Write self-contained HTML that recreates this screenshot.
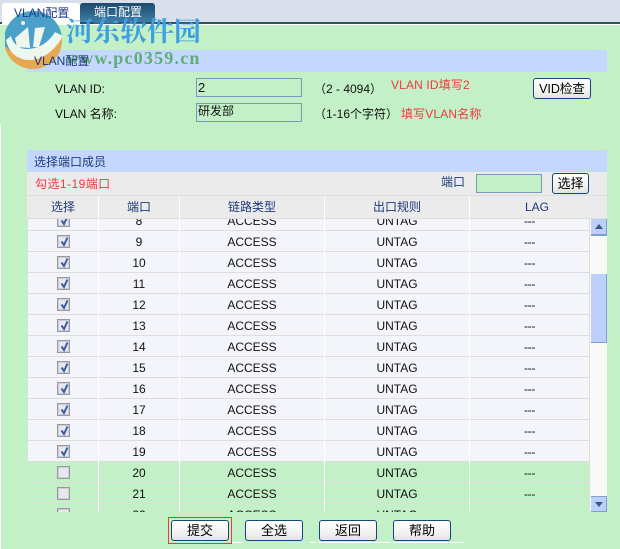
<!DOCTYPE html>
<html lang="zh">
<head>
<meta charset="utf-8">
<style>
html,body{margin:0;padding:0}
body{width:620px;height:549px;overflow:hidden;position:relative;background:#c3f0c6;font:12px "Liberation Sans","WenQuanYi Zen Hei","Noto Sans CJK SC",sans-serif;color:#111}
div,span{position:absolute;white-space:nowrap}
.blue{color:#1d3a7a}
.red{color:#f0383c}
.panel{left:27px;width:580px;height:22px;background:#c4d8fe}
.inp{border:1px solid #7799bb;box-sizing:border-box}
.btn{box-sizing:border-box;border:1px solid #12477f;border-radius:3px;background:linear-gradient(#fff,#f2f2f2 60%,#e4e4dc);text-align:center;color:#000;font-size:13px}
.row{left:28px;width:561px;height:20px;border-bottom:1px solid #ddd;background:#f3f5fb}
.off{background:#c3f0c6}
.row span{top:3px;line-height:16px;text-align:center}
.c1{left:0;width:70px}.c2{left:71px;width:80px}.c3{left:152px;width:144px}.c4{left:297px;width:144px}.c5{left:442px;width:119px;letter-spacing:-.3px}
.cb{left:29px;top:4px;width:13px;height:13px;box-sizing:border-box;border:1px solid #999;background:#e6e8ee;box-shadow:inset 0 0 0 1px #ccd}
.cb svg{position:absolute;left:1px;top:0}
.sep{width:1px;background:#fff}
.hd{top:196px;height:22px;line-height:22px;text-align:center;color:#1d3a7a}
.wl{top:542px;height:1px;background:#fff}
</style>
</head>
<body>
<div style="left:0;top:0;width:620px;height:22px;background:#d9dfeb"></div>
<div style="left:0;top:22px;width:620px;height:2px;background:#33505f"></div>
<div style="left:0;top:24px;width:620px;height:1px;background:#fff"></div>
<div style="left:0;top:124px;width:1px;height:425px;background:#fff"></div>
<div style="left:2px;top:3px;width:78px;height:22px;background:#fff;border-radius:3px 3px 0 0"></div>
<div style="left:80px;top:3px;width:75px;height:19px;background:linear-gradient(#1d4a6c,#3f7ea8);border-radius:3px 3px 0 0"></div>
<div style="left:94px;top:4px;line-height:16px;color:#fff">端口配置</div>

<div class="panel" style="top:50px"></div>

<svg style="position:absolute;left:5px;top:10px" width="58" height="60" viewBox="0 0 58 60">
<defs><clipPath id="lc"><circle cx="28" cy="30" r="29"/></clipPath></defs>
<g clip-path="url(#lc)">
<rect width="58" height="60" fill="#4aa0c8"/>
<path d="M0 36L15 49L35 46L58 27V60H0Z" fill="#e8a850"/>
<path d="M1 30C4 44 14 50 24 50C38 50 50 40 58 26L50 22C44 32 34 39 22 39C14 39 8 34 6 26Z" fill="#eef7ee"/>
<path d="M10 28L23 17L25 38L12 37Z" fill="#eef7ee"/>
<path d="M30 18L40 17L34 37L28 37Z" fill="#eef7ee"/>
<circle cx="18" cy="13" r="2" fill="#eef7ee"/>
</g>
</svg>

<div style="left:66px;top:13px;font:bold 27px/34px 'Noto Serif CJK SC','Liberation Serif',serif;color:#3d9fe0">河东软件园</div>
<div style="left:66px;top:47px;font:bold 18px/22px 'Liberation Serif',serif;color:#62ad76;letter-spacing:1.2px">www.pc0359.cn</div>
<div style="left:14px;top:5px;line-height:16px;color:#1d3a8a">VLAN配置</div>
<div class="blue" style="left:34px;top:54px;line-height:14px">VLAN配置</div>

<div style="left:55px;top:81px;line-height:16px">VLAN ID:</div>
<div style="left:55px;top:106px;line-height:16px">VLAN 名称:</div>
<div class="inp" style="left:196px;top:78px;width:106px;height:19px;padding-left:1px;line-height:17px;font-size:13px">2</div>
<div class="inp" style="left:196px;top:103px;width:106px;height:19px;padding-left:1px;line-height:15px">研发部</div>
<div style="left:314px;top:81px;line-height:16px">（2 - 4094）</div>
<div style="left:314px;top:106px;line-height:16px">（1-16个字符）</div>
<div class="red" style="left:391px;top:77px;line-height:16px;letter-spacing:.15px">VLAN ID填写2</div>
<div class="red" style="left:401px;top:106px;line-height:16px;letter-spacing:.15px">填写VLAN名称</div>
<div class="btn" style="left:533px;top:78px;width:58px;height:21px;line-height:20px;font-size:12.5px">VID检查</div>

<div class="panel" style="top:150px"></div>
<div class="blue" style="left:34px;top:154px;line-height:16px">选择端口成员</div>
<div style="left:27px;top:172px;width:580px;height:23px;background:#ebebeb"></div>
<div class="red" style="left:35px;top:176px;line-height:16px;letter-spacing:.45px">勾选1-19端口</div>
<div class="blue" style="left:441px;top:174px;line-height:16px">端口</div>
<div class="inp" style="left:476px;top:174px;width:66px;height:19px;background:#c3f0c6"></div>
<div class="btn" style="left:552px;top:173px;width:37px;height:21px;line-height:20px">选择</div>
<div style="left:27px;top:195px;width:580px;height:1px;background:#ddd"></div>
<div style="left:27px;top:196px;width:580px;height:22px;background:#ebebeb"></div>
<div class="hd" style="left:28px;width:70px">选择</div>
<div class="hd" style="left:99px;width:80px">端口</div>
<div class="hd" style="left:180px;width:144px">链路类型</div>
<div class="hd" style="left:325px;width:144px">出口规则</div>
<div class="hd" style="left:470px;width:134px">LAG</div>
<div style="left:27px;top:218px;width:580px;height:1px;background:#ddd"></div>

<div style="left:0;top:219px;width:620px;height:293px;overflow:hidden">
<div class="row" style="top:-9px"><div class="cb"><svg width="11" height="11" viewBox="0 0 11 11"><path d="M2.5 5.5L5 9L8.5 1.5" fill="none" stroke="#3d5ca8" stroke-width="2"/></svg></div><span class="c2">8</span><span class="c3">ACCESS</span><span class="c4">UNTAG</span><span class="c5">---</span></div>
<div class="row" style="top:12px"><div class="cb"><svg width="11" height="11" viewBox="0 0 11 11"><path d="M2.5 5.5L5 9L8.5 1.5" fill="none" stroke="#3d5ca8" stroke-width="2"/></svg></div><span class="c2">9</span><span class="c3">ACCESS</span><span class="c4">UNTAG</span><span class="c5">---</span></div>
<div class="row" style="top:33px"><div class="cb"><svg width="11" height="11" viewBox="0 0 11 11"><path d="M2.5 5.5L5 9L8.5 1.5" fill="none" stroke="#3d5ca8" stroke-width="2"/></svg></div><span class="c2">10</span><span class="c3">ACCESS</span><span class="c4">UNTAG</span><span class="c5">---</span></div>
<div class="row" style="top:54px"><div class="cb"><svg width="11" height="11" viewBox="0 0 11 11"><path d="M2.5 5.5L5 9L8.5 1.5" fill="none" stroke="#3d5ca8" stroke-width="2"/></svg></div><span class="c2">11</span><span class="c3">ACCESS</span><span class="c4">UNTAG</span><span class="c5">---</span></div>
<div class="row" style="top:75px"><div class="cb"><svg width="11" height="11" viewBox="0 0 11 11"><path d="M2.5 5.5L5 9L8.5 1.5" fill="none" stroke="#3d5ca8" stroke-width="2"/></svg></div><span class="c2">12</span><span class="c3">ACCESS</span><span class="c4">UNTAG</span><span class="c5">---</span></div>
<div class="row" style="top:96px"><div class="cb"><svg width="11" height="11" viewBox="0 0 11 11"><path d="M2.5 5.5L5 9L8.5 1.5" fill="none" stroke="#3d5ca8" stroke-width="2"/></svg></div><span class="c2">13</span><span class="c3">ACCESS</span><span class="c4">UNTAG</span><span class="c5">---</span></div>
<div class="row" style="top:117px"><div class="cb"><svg width="11" height="11" viewBox="0 0 11 11"><path d="M2.5 5.5L5 9L8.5 1.5" fill="none" stroke="#3d5ca8" stroke-width="2"/></svg></div><span class="c2">14</span><span class="c3">ACCESS</span><span class="c4">UNTAG</span><span class="c5">---</span></div>
<div class="row" style="top:138px"><div class="cb"><svg width="11" height="11" viewBox="0 0 11 11"><path d="M2.5 5.5L5 9L8.5 1.5" fill="none" stroke="#3d5ca8" stroke-width="2"/></svg></div><span class="c2">15</span><span class="c3">ACCESS</span><span class="c4">UNTAG</span><span class="c5">---</span></div>
<div class="row" style="top:159px"><div class="cb"><svg width="11" height="11" viewBox="0 0 11 11"><path d="M2.5 5.5L5 9L8.5 1.5" fill="none" stroke="#3d5ca8" stroke-width="2"/></svg></div><span class="c2">16</span><span class="c3">ACCESS</span><span class="c4">UNTAG</span><span class="c5">---</span></div>
<div class="row" style="top:180px"><div class="cb"><svg width="11" height="11" viewBox="0 0 11 11"><path d="M2.5 5.5L5 9L8.5 1.5" fill="none" stroke="#3d5ca8" stroke-width="2"/></svg></div><span class="c2">17</span><span class="c3">ACCESS</span><span class="c4">UNTAG</span><span class="c5">---</span></div>
<div class="row" style="top:201px"><div class="cb"><svg width="11" height="11" viewBox="0 0 11 11"><path d="M2.5 5.5L5 9L8.5 1.5" fill="none" stroke="#3d5ca8" stroke-width="2"/></svg></div><span class="c2">18</span><span class="c3">ACCESS</span><span class="c4">UNTAG</span><span class="c5">---</span></div>
<div class="row" style="top:222px"><div class="cb"><svg width="11" height="11" viewBox="0 0 11 11"><path d="M2.5 5.5L5 9L8.5 1.5" fill="none" stroke="#3d5ca8" stroke-width="2"/></svg></div><span class="c2">19</span><span class="c3">ACCESS</span><span class="c4">UNTAG</span><span class="c5">---</span></div>
<div class="row off" style="top:243px"><div class="cb"></div><span class="c2">20</span><span class="c3">ACCESS</span><span class="c4">UNTAG</span><span class="c5">---</span></div>
<div class="row off" style="top:264px"><div class="cb"></div><span class="c2">21</span><span class="c3">ACCESS</span><span class="c4">UNTAG</span><span class="c5">---</span></div>
<div class="row off" style="top:285px"><div class="cb"></div><span class="c2">22</span><span class="c3">ACCESS</span><span class="c4">UNTAG</span><span class="c5">---</span></div>
</div>

<div class="sep" style="left:98px;top:196px;height:316px"></div>
<div class="sep" style="left:179px;top:196px;height:316px"></div>
<div class="sep" style="left:324px;top:196px;height:316px"></div>
<div class="sep" style="left:469px;top:196px;height:316px"></div>

<div style="left:589px;top:219px;width:1px;height:293px;background:#ddd"></div>
<div style="left:590px;top:219px;width:17px;height:293px;background:#f8f8f6"></div>
<div style="left:591px;top:219px;width:16px;height:17px;box-sizing:border-box;background:#bdd0fa;border-right:1px solid #7f9fd0;border-bottom:2px solid #7f9fd0"></div>
<svg style="position:absolute;left:595px;top:224px" width="8" height="5"><path d="M4 0L8 5H0Z" fill="#3f5580"/></svg>
<div style="left:591px;top:274px;width:16px;height:69px;box-sizing:border-box;background:#bdd0fa;border-right:1px solid #7f9fd0;border-bottom:1px solid #7f9fd0"></div>
<div style="left:591px;top:496px;width:16px;height:16px;box-sizing:border-box;background:#bdd0fa;border-right:1px solid #7f9fd0;border-bottom:1px solid #7f9fd0;border-top:1px solid #7f9fd0"></div>
<svg style="position:absolute;left:595px;top:502px" width="8" height="5"><path d="M0 0H8L4 5Z" fill="#3f5580"/></svg>

<div class="wl" style="left:232px;width:11px"></div>
<div class="wl" style="left:310px;width:6px"></div>
<div class="wl" style="left:318px;width:72px"></div>
<div class="wl" style="left:393px;width:71px"></div>

<div style="left:168px;top:517px;width:64px;height:27px;box-sizing:border-box;border:1px solid #f03a3a"></div>
<div class="btn" style="left:171px;top:520px;width:58px;height:21px;line-height:20px">提交</div>
<div class="btn" style="left:245px;top:520px;width:58px;height:21px;line-height:20px">全选</div>
<div class="btn" style="left:319px;top:520px;width:58px;height:21px;line-height:20px">返回</div>
<div class="btn" style="left:393px;top:520px;width:58px;height:21px;line-height:20px">帮助</div>
</body>
</html>
